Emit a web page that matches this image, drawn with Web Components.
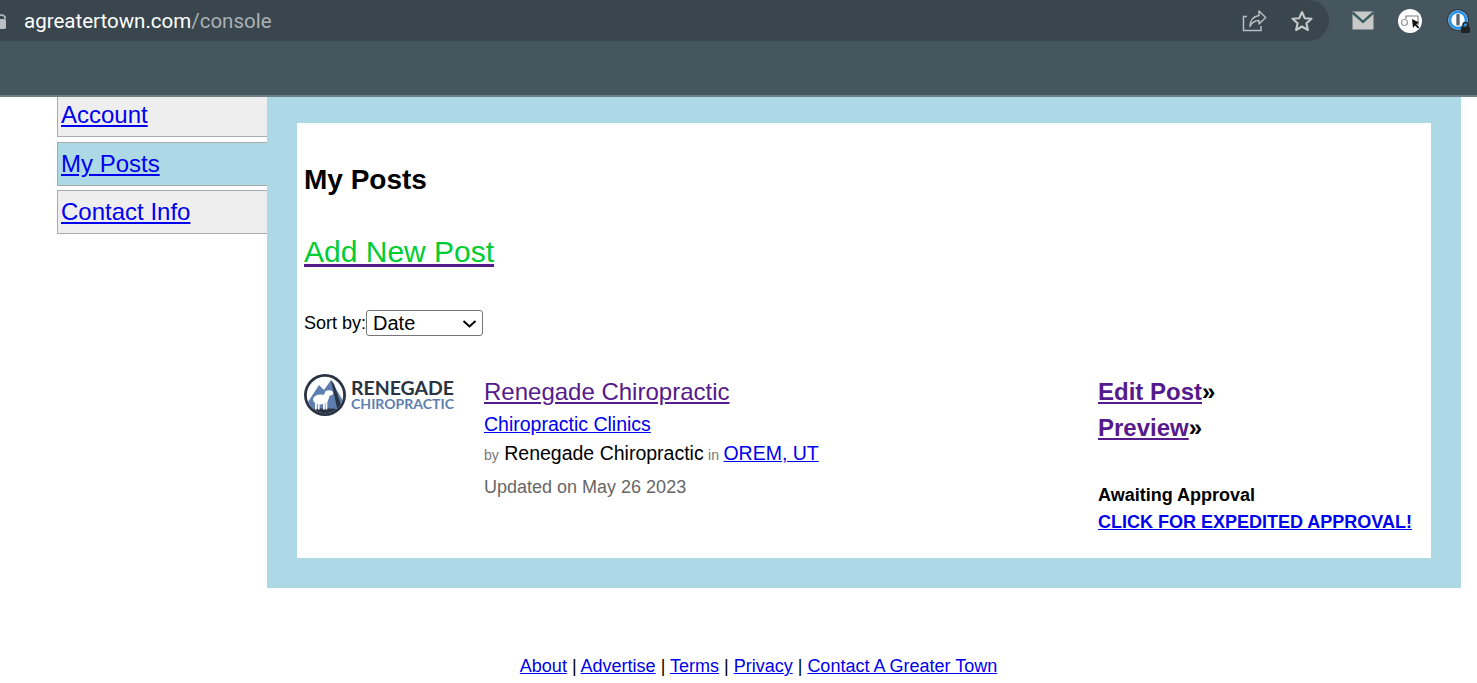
<!DOCTYPE html>
<html lang="en">
<head>
<meta charset="utf-8">
<title>A Greater Town - Console</title>
<style>
  html, body { margin: 0; height: 683px; overflow: hidden; background: #fff; }
  body { font-family: "Liberation Sans", Arial, sans-serif; color: #000; }
</style>
</head>
<body>
<browser-bar url="agreatertown.com" path="/console"></browser-bar>
<console-layout>
  <side-nav slot="nav">
    <nav-item href="#account" first>Account</nav-item>
    <nav-item href="#posts" active>My Posts</nav-item>
    <nav-item href="#contact">Contact Info</nav-item>
  </side-nav>
  <posts-panel>
    <post-row
      title="Renegade Chiropractic"
      category="Chiropractic Clinics"
      author="Renegade Chiropractic"
      place="OREM, UT"
      updated="Updated on May 26 2023"></post-row>
  </posts-panel>
</console-layout>
<site-footer></site-footer>

<script>
class BrowserBar extends HTMLElement {
  connectedCallback() {
    const root = this.attachShadow({ mode: "open" });
    root.innerHTML = `
      <style>
        :host { display: block; height: 97px; box-sizing: border-box; background: #45565f; border-bottom: 2px solid #6f7d85; }
        .top { display: flex; align-items: flex-start; height: 41px; }
        .omni {
          width: 1329px; height: 41px; background: #3a464e; border-radius: 0 21px 21px 0;
          display: flex; align-items: center; box-sizing: border-box; overflow: hidden;
        }
        .lock { width: 6px; height: 16px; flex: none; margin-top: 1px; }
        .url { font: 20.5px Roboto, sans-serif; color: #fff; margin-left: 18px; white-space: nowrap; flex: 1; }
        .url span { color: #a9b1b6; }
        .act { flex: none; display: block; }
        .share { margin-right: 23px; }
        .star { margin-right: 15px; }
        .ext { display: flex; align-items: center; height: 41px; }
        .ext svg { display: block; flex: none; }
      </style>
      <div class="top">
        <div class="omni">
          <svg class="lock" viewBox="0 0 6 16"><path d="M-2 6V4a4 4 0 0 1 7 0v2" fill="none" stroke="#b9bfc3" stroke-width="1.6"/><rect x="-6" y="6" width="12" height="10" rx="1.5" fill="#b9bfc3"/></svg>
          <div class="url">${this.getAttribute("url")}<span>${this.getAttribute("path")}</span></div>
          <svg class="act share" width="26" height="24" viewBox="0 0 26 24" fill="none" stroke="#b7bdc1" stroke-width="1.5">
            <path d="M6 7.500H2.500V21.500H20V17"/>
            <path d="M18 2l6.700 6.500L18 15v-3.500c-4 0-7 1.500-9 6 0-6 3-10 9-11z" stroke-linejoin="round"/>
          </svg>
          <svg class="act star" width="24" height="24" viewBox="0 0 24 24" fill="none" stroke="#c3c8cb" stroke-width="2.100" stroke-linejoin="round">
            <path d="M12 3l2.700 6.200 6.800.6-5.100 4.500 1.500 6.700L12 17.500 6.100 21l1.500-6.700-5.100-4.500 6.800-.6z"/>
          </svg>
        </div>
        <div class="ext">
          <svg style="margin-left:23px" width="22" height="19" viewBox="0 0 22 19">
            <rect width="21" height="18" x=".5" y=".5" fill="#c9c9c9"/>
            <path d="M.5 1.500L11 11 21.500 1.500" fill="none" stroke="#3b5e5e" stroke-width="2.400"/>
          </svg>
          <svg style="margin-left:24px" width="24" height="24" viewBox="0 0 24 24">
            <circle cx="12" cy="12" r="12" fill="#fff"/>
            <circle cx="6.500" cy="13.500" r="3" fill="none" stroke="#9a9a9a" stroke-width="1.200"/>
            <path d="M8 10V7h12v9" fill="none" stroke="#777" stroke-width="1.100"/>
            <path d="M14 10l1 9 2-2.500 3 3 1.300-1.300-3-3 2.700-1.700z" fill="#111"/>
          </svg>
          <svg style="margin-left:25px" width="24" height="26" viewBox="0 0 24 26">
            <circle cx="11" cy="12" r="11" fill="#2c3a44"/>
            <circle cx="11" cy="12" r="9.800" fill="#fff"/>
            <circle cx="11" cy="12" r="8.200" fill="none" stroke="#2f93e8" stroke-width="3"/>
            <rect x="9.300" y="6" width="3.400" height="11.500" rx="1" fill="#5a666e"/>
            <path d="M16 18.500V17a2.500 2.500 0 0 1 5 0v1.500" fill="none" stroke="#222" stroke-width="1.400"/>
            <rect x="14" y="18.500" width="9" height="6.500" rx="1.200" fill="#222"/>
          </svg>
        </div>
      </div>
    `;
  }
}

class ConsoleLayout extends HTMLElement {
  constructor() {
    super();
    this.attachShadow({ mode: "open" }).innerHTML = `
      <style>
        :host { display: flex; margin: 0 16px 0 57px; align-items: flex-start; }
        .nav { width: 210px; flex: none; }
        .main { flex: 1; min-width: 0; }
      </style>
      <div class="nav"><slot name="nav"></slot></div>
      <div class="main"><slot></slot></div>
    `;
  }
}

class SideNav extends HTMLElement {
  constructor() {
    super();
    this.attachShadow({ mode: "open" }).innerHTML = `
      <style>:host { display: block; }</style>
      <slot></slot>
    `;
  }
}

class NavItem extends HTMLElement {
  connectedCallback() {
    const root = this.attachShadow({ mode: "open" });
    const active = this.hasAttribute("active");
    const first = this.hasAttribute("first");
    root.innerHTML = `
      <style>
        :host {
          display: block; box-sizing: border-box;
          background: ${active ? "#add8e6" : "#eee"};
          border: 1px solid #aaa; border-right: 0;
          height: ${first ? 40 : 44}px;
          margin-bottom: ${first ? 5 : 4}px;
          ${first ? "border-top: 0;" : ""}
          padding: ${first ? "3px" : "6px"} 0 0 3px;
          font-size: 24px; line-height: 30px;
        }
        a { color: #00e; }
      </style>
      <a href="${this.getAttribute("href")}"><slot></slot></a>
    `;
  }
}

class PostsPanel extends HTMLElement {
  constructor() {
    super();
    this.attachShadow({ mode: "open" }).innerHTML = `
      <style>
        :host { display: block; background: #add8e6; padding: 26px 30px 30px; }
        .card { background: #fff; height: 435px; box-sizing: border-box; padding: 41px 7px 0; }
        h2 { margin: 0; font-size: 28px; line-height: 32px; font-weight: bold; }
        .add { display: block; width: max-content; margin-top: 38px; font-size: 30px; line-height: 36px; color: #551a8b; }
        .add span { color: #00cc33; }
        .sort { display: flex; align-items: center; margin-top: 40px; font-size: 18px; line-height: 26px; }
        .pick { position: relative; width: 117px; height: 26px; }
        select {
          appearance: none; -webkit-appearance: none; display: block;
          width: 117px; height: 26px; box-sizing: border-box; font: 20px "Liberation Sans", Arial, sans-serif;
          background: #fff; color: #000; border: 1px solid #767676; border-radius: 3px; padding: 0 0 0 6px;
        }
        .pick svg { position: absolute; left: 96px; top: 10px; pointer-events: none; }
      </style>
      <div class="card">
        <h2>My Posts</h2>
        <a class="add" href="#new"><span>Add New Post</span></a>
        <div class="sort">Sort by:<div class="pick">
          <select><option>Date</option><option>Title</option></select>
          <svg width="15" height="8" viewBox="0 0 15 8"><path d="M1.500 1l6 5.500 6-5.500" fill="none" stroke="#000" stroke-width="2"/></svg>
        </div></div>
        <slot></slot>
      </div>
    `;
  }
}

class PostRow extends HTMLElement {
  connectedCallback() {
    const get = (name) => this.getAttribute(name);
    this.attachShadow({ mode: "open" }).innerHTML = `
      <style>
        :host { display: grid; grid-template-columns: 180px 614px 1fr; margin-top: 37px; }
        .logo { display: block; margin-top: 1px; }
        .logo text { font-family: Lato, sans-serif; font-weight: 700; }
        .title { display: block; font-size: 24px; line-height: 30px; color: #551a8b; width: max-content; margin-top: 4px; }
        .cat { display: block; font-size: 19.5px; line-height: 24px; color: #00e; width: max-content; margin-top: 5px; }
        .by { font-size: 19.5px; line-height: 24px; margin-top: 5px; }
        .by small { font-size: 14px; color: #777; }
        .by small + small { margin-left: -1px; margin-right: -1px; }
        .by a { color: #00e; }
        .date { font-size: 18px; line-height: 22px; color: #666; margin-top: 9px; }
        .actions { font-size: 24px; line-height: 36px; font-weight: bold; padding-top: 1px; }
        .actions a { color: #551a8b; }
        .status { font-size: 18px; line-height: 26px; font-weight: bold; margin-top: 36px; }
        .status a { display: block; color: #00e; margin-top: 1px; }
      </style>
      <svg class="logo" width="150" height="44" viewBox="0 0 150 44">
        <defs><clipPath id="disc"><circle cx="21" cy="21" r="18.200"/></clipPath></defs>
        <circle cx="21" cy="21" r="21" fill="#2a3341"/>
        <g clip-path="url(#disc)">
          <rect width="42" height="42" fill="#fff"/>
          <path d="M0 34L15 11l5 5 7-10 15 26v12H0z" fill="#5d7eaf"/>
          <path d="M27 6l3 4 8 24h-5z" fill="#2a3341"/>
          <path d="M0 36c10-2 30-2 42 0v8H0z" fill="#2a3341"/>
        </g>
        <g fill="#fff">
          <ellipse cx="16.500" cy="25.500" rx="7.500" ry="5"/>
          <rect x="11" y="27" width="1.800" height="8.500"/>
          <rect x="13.800" y="27" width="1.800" height="8.500"/>
          <rect x="19" y="27" width="1.800" height="8.500"/>
          <rect x="21.500" y="27" width="1.800" height="8.500"/>
          <path d="M19 22l3-5 4 1-1 6-2 4z"/>
          <ellipse cx="25" cy="19" rx="4" ry="2.800"/>
        </g>
        <text x="47" y="20.500" font-size="18.500" fill="#2a3341" textLength="103" lengthAdjust="spacingAndGlyphs">RENEGADE</text>
        <text x="47" y="35" font-size="13.500" fill="#5d7eaf" textLength="103" lengthAdjust="spacingAndGlyphs">CHIROPRACTIC</text>
      </svg>
      <div>
        <a class="title" href="#post">${get("title")}</a>
        <a class="cat" href="#cat">${get("category")}</a>
        <div class="by"><small>by</small> ${get("author")} <small>in</small> <a href="#place">${get("place")}</a></div>
        <div class="date">${get("updated")}</div>
      </div>
      <div>
        <div class="actions"><a href="#edit">Edit Post</a>»<br><a href="#preview">Preview</a>»</div>
        <div class="status">Awaiting Approval<a href="#expedite">CLICK FOR EXPEDITED APPROVAL!</a></div>
      </div>
    `;
  }
}

class SiteFooter extends HTMLElement {
  constructor() {
    super();
    const links = ["About", "Advertise", "Terms", "Privacy", "Contact A Greater Town"];
    this.attachShadow({ mode: "open" }).innerHTML = `
      <style>
        :host { display: block; margin: 66px 17px 0 57px; text-align: center; font-size: 18px; line-height: 24px; }
        a { color: #00e; }
      </style>
      ${links.map((label) => `<a href="#">${label}</a>`).join(" | ")}
    `;
  }
}

customElements.define("browser-bar", BrowserBar);
customElements.define("console-layout", ConsoleLayout);
customElements.define("side-nav", SideNav);
customElements.define("nav-item", NavItem);
customElements.define("posts-panel", PostsPanel);
customElements.define("post-row", PostRow);
customElements.define("site-footer", SiteFooter);
</script>
</body>
</html>
